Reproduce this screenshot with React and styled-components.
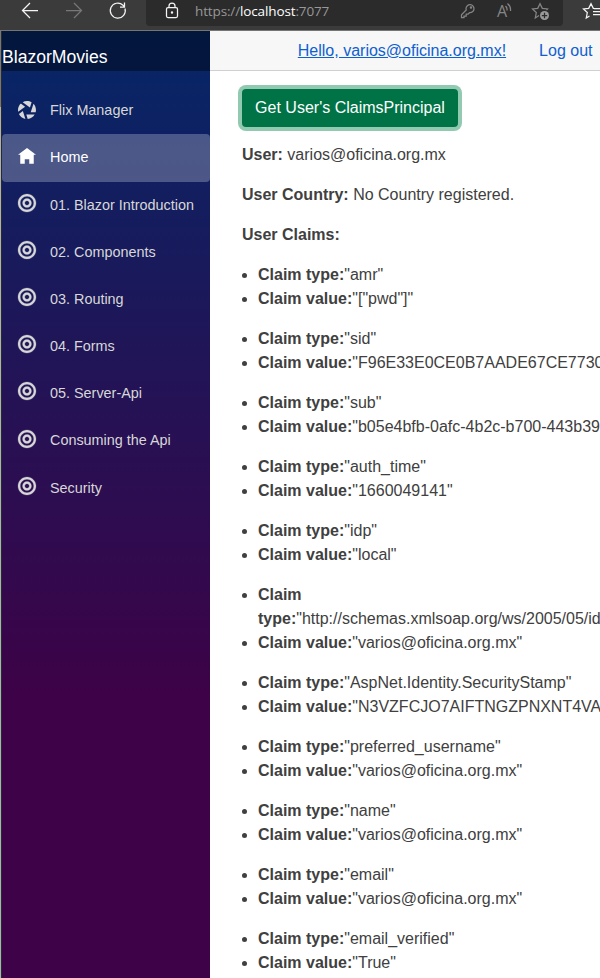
import React from "react";
import styled, { createGlobalStyle, css } from "styled-components";

const Global = createGlobalStyle`
  * { box-sizing: border-box; }
  body { margin: 0; background: #fff; overflow: hidden; }
`;

const Window = styled.div`
  width: 600px;
  height: 978px;
  overflow: hidden;
  display: flex;
  flex-direction: column;
  font-family: "Liberation Sans", Arial, sans-serif;
  font-size: 16px;
  line-height: 24px;
  color: #404040;
`;

const BrowserBar = styled.header`
  flex: none;
  display: flex;
  height: 31px;
  padding-left: 2px;
  background: #3b3b3b;
  border-bottom: 1px solid #757575;
`;

const NavButtons = styled.div`
  flex: none;
  display: flex;
  width: 144px;
  padding-left: 18px;
  gap: 20px;
`;

const AddressBar = styled.div`
  flex: none;
  display: flex;
  width: 417px;
  height: 26px;
  margin-right: 17px;
  padding-left: 17px;
  background: #2b2b2b;
  border-radius: 0 0 4px 4px;
`;

const Url = styled.div`
  width: 262px;
  margin-left: 8px;
  font: 13.5px/22px "Open Sans", sans-serif;
  letter-spacing: -0.13px;
  color: #989898;
  white-space: nowrap;
`;

const Host = styled.span`
  color: #fff;
`;

const AddressActions = styled.div`
  display: flex;
  gap: 12px;
`;

const Glyph = styled.svg`
  display: block;
  flex: none;
  width: 24px;
  height: 24px;
  overflow: visible;
  fill: none;
  stroke: ${(p) => p.$color};
  stroke-width: 1.25;
`;

const Letter = styled.text`
  fill: #858585;
  stroke: none;
  font: 16px "Open Sans", sans-serif;
`;

const Body = styled.div`
  flex: 1;
  display: flex;
  min-height: 0;
`;

const Edge = styled.div`
  flex: none;
  width: 2px;
  background: linear-gradient(#777 0 76px, #b0b0b0 76px);
  border-right: 1px solid #252a35;
`;

const Sidebar = styled.nav`
  flex: none;
  width: 208px;
  background: linear-gradient(180deg, rgb(5, 39, 103) 0%, #3d0247 70%);
`;

const Brand = styled.div`
  height: 40px;
  padding-top: 14px;
  background: rgba(0, 0, 0, 0.4);
  color: #fff;
  font-size: 17.6px;
`;

const NavList = styled.div`
  padding-top: 16.17px;
`;

const NavItem = styled.a`
  display: flex;
  height: 47.2px;
  padding-left: 16px;
  border-radius: 4px;
  color: #d7d7d7;
  font-size: 14.4px;
  line-height: 46.2px;
  white-space: nowrap;
  ${(p) =>
    p.$active &&
    css`
      height: 48px;
      margin-bottom: -0.8px;
      background: rgba(255, 255, 255, 0.25);
      color: #fff;
    `}
`;

const NavIcon = styled.svg`
  flex: none;
  width: 18px;
  height: 18px;
  margin: ${(p) => (p.$raised ? "12.2px" : "14px")} 14px 0 0;
  overflow: visible;
  fill: currentColor;
  stroke: currentColor;
  stroke-width: ${(p) => (p.$raised ? 0.1 : 0)};
`;

const Main = styled.main`
  flex: 1;
  min-width: 0;
`;

const TopRow = styled.div`
  display: flex;
  justify-content: flex-end;
  gap: 33px;
  height: 40px;
  padding: 8px 7.5px 0 0;
  background: #f7f7f7;
  border-bottom: 1px solid #d0d0d0;
`;

const TopLink = styled.a`
  color: #0d60d0;
  text-decoration: ${(p) => (p.$underlined ? "underline" : "none")};
`;

const Article = styled.article`
  padding: 18px 0 0 32px;
  white-space: nowrap;
`;

const ClaimsButton = styled.button`
  display: block;
  width: 216px;
  height: 38px;
  margin-bottom: 16px;
  padding: 0;
  border: 0;
  border-radius: 4px;
  background: #007346;
  box-shadow: 0 0 0 4px #91c9b1;
  color: #fff;
  font: inherit;
`;

const Paragraph = styled.p`
  margin: 0 0 16px;
`;

const ClaimList = styled.ul`
  margin: 0 0 16px;
  padding-left: 16px;
`;

const ICONS = {
  aperture:
    "M4 0c-.69 0-1.34.19-1.91.5l3.22 2.34.75-2.25c-.6-.36-1.31-.59-2.06-.59zm-2.75 1.13c-.76.73-1.25 1.74-1.25 2.88 0 .25.02.48.06.72l3.09-2.22-1.91-1.38zm5.63.13l-1.22 3.75h2.19c.08-.32.13-.65.13-1 0-1.07-.41-2.03-1.09-2.75zm-4.72 3.22l-1.75 1.25c.55 1.13 1.6 1.99 2.88 2.22l-1.13-3.47zm1.53 1.53l.63 1.97c1.33-.12 2.46-.88 3.09-1.97h-3.72z",
  home: "M4 0l-4 3h1v4h2v-2h2v2h2v-4.03l1 .03-4-3z",
  target:
    "M4 0c-2.2 0-4 1.8-4 4s1.8 4 4 4 4-1.8 4-4-1.8-4-4-4zm0 1c1.66 0 3 1.34 3 3s-1.34 3-3 3-3-1.34-3-3 1.34-3 3-3zm0 1c-1.1 0-2 .9-2 2s.9 2 2 2 2-.9 2-2-.9-2-2-2zm0 1c.56 0 1 .44 1 1s-.44 1-1 1-1-.44-1-1 .44-1 1-1z",
};

const NAV = [
  ["Flix Manager", "aperture"],
  ["Home", "home"],
  ["01. Blazor Introduction", "target"],
  ["02. Components", "target"],
  ["03. Routing", "target"],
  ["04. Forms", "target"],
  ["05. Server-Api", "target"],
  ["Consuming the Api", "target"],
  ["Security", "target"],
];

const CLAIMS = [
  ["amr", '["pwd"]'],
  ["sid", "F96E33E0CE0B7AADE67CE7730"],
  ["sub", "b05e4bfb-0afc-4b2c-b700-443b39"],
  ["auth_time", "1660049141"],
  ["idp", "local"],
  ["http://schemas.xmlsoap.org/ws/2005/05/id", "varios@oficina.org.mx", true],
  ["AspNet.Identity.SecurityStamp", "N3VZFCJO7AIFTNGZPNXNT4VA"],
  ["preferred_username", "varios@oficina.org.mx"],
  ["name", "varios@oficina.org.mx"],
  ["email", "varios@oficina.org.mx"],
  ["email_verified", "True"],
];

function Browser() {
  return (
    <BrowserBar>
      <NavButtons>
        <Glyph $color="#f5f5f5" viewBox="0 0 24 24">
          <path d="M18 10.5H2.5M10 3l-7.5 7.5L10 18" />
        </Glyph>
        <Glyph $color="#777" viewBox="0 0 24 24">
          <path d="M2 10.5h15.5M10 3l7.5 7.5L10 18" />
        </Glyph>
        <Glyph $color="#f5f5f5" viewBox="0 0 24 24">
          <path d="M17 8.5A7.5 7.5 0 1 1 15 5.2L16.5 7M16.5 2.5V7H12" />
        </Glyph>
      </NavButtons>
      <AddressBar>
        <Glyph $color="#f5f5f5" viewBox="0 0 24 24">
          <rect x="3.5" y="7.5" width="11" height="10" rx="1.5" />
          <path d="M6 7.5V6a3 3 0 0 1 6 0v1.5" />
          <circle cx="9" cy="12.5" r=".6" fill="#f5f5f5" />
        </Glyph>
        <Url>
          https://<Host>localhost</Host>:7077
        </Url>
        <AddressActions>
          <Glyph $color="#858585" viewBox="0 0 24 24">
            <path d="M9 8.5a4 4 0 1 1 3.5 4.2l-1.5 1.5H9.2v2H7v1.5H4.5v-3L9.2 10z" />
            <circle cx="14" cy="7.5" r=".6" />
          </Glyph>
          <Glyph $color="#858585" viewBox="0 0 24 24">
            <Letter x="4" y="17">A</Letter>
            <path d="M12.5 6a5 5 0 0 1 1.5 4.5M14.5 3.5a8.5 8.5 0 0 1 3 7.5" />
          </Glyph>
          <Glyph $color="#858585" viewBox="0 0 24 24">
            <path d="M10 15.5l-3.7 2.5 1-5.5L3.5 9l5.2-.7L11 3.7l2.3 4.6 5.2.7-1 1" />
            <circle cx="15.5" cy="15.5" r="4.5" fill="#9a9a9a" stroke="none" />
            <path d="M12.8 15.5h5.4M15.5 12.8v5.4" stroke="#2b2b2b" />
          </Glyph>
        </AddressActions>
      </AddressBar>
      <Glyph $color="#f5f5f5" viewBox="0 0 24 24">
        <path d="M9.5 16l-3.2 2 1-5.5L3.5 9l5.2-.7L11 3.7l2.3 4.6 1.7.2M14 8.7h8M13 11.7h9M13 14.7h9" />
      </Glyph>
    </BrowserBar>
  );
}

export default function App() {
  return (
    <Window>
      <Global />
      <Browser />
      <Body>
        <Edge />
        <Sidebar>
          <Brand>BlazorMovies</Brand>
          <NavList>
            {NAV.map(([label, icon]) => (
              <NavItem key={label} $active={icon === "home"}>
                <NavIcon viewBox="0 0 8 8" $raised={icon === "target"}>
                  <path d={ICONS[icon]} />
                </NavIcon>
                {label}
              </NavItem>
            ))}
          </NavList>
        </Sidebar>
        <Main>
          <TopRow>
            <TopLink $underlined>Hello, varios@oficina.org.mx!</TopLink>
            <TopLink>Log out</TopLink>
          </TopRow>
          <Article>
            <ClaimsButton>Get User's ClaimsPrincipal</ClaimsButton>
            <Paragraph><b>User:</b> varios@oficina.org.mx</Paragraph>
            <Paragraph><b>User Country:</b> No Country registered.</Paragraph>
            <Paragraph><b>User Claims:</b></Paragraph>
            {CLAIMS.map(([type, value, wrap]) => (
              <ClaimList key={type}>
                <li><b>Claim {wrap && <br />}type:</b>"{type}{!wrap && '"'}</li>
                <li><b>Claim value:</b>"{value}"</li>
              </ClaimList>
            ))}
          </Article>
        </Main>
      </Body>
    </Window>
  );
}
